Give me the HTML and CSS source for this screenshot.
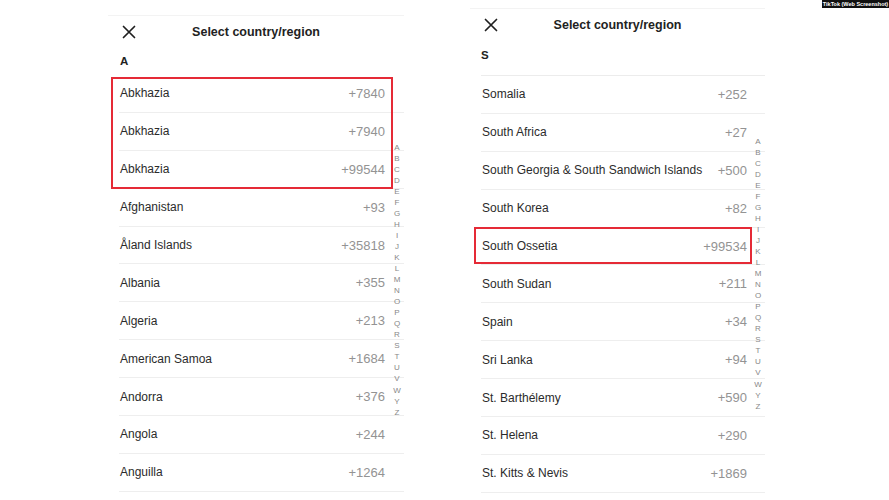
FILE: index.html
```html
<!DOCTYPE html>
<html>
<head>
<meta charset="utf-8">
<link rel="stylesheet" href="styles.css">
</head>
<body>
<div class="badge">TikTok (Web Screenshot)</div>
<div class="page">
  <section class="panel panel-left">
    <header class="head">
      <svg class="close" viewBox="0 0 14 14" width="14" height="14"><path d="M1.5 1.5 L12.5 12.5 M12.5 1.5 L1.5 12.5" stroke="#1f1f1f" stroke-width="1.7" stroke-linecap="round" fill="none"/></svg>
      <h1 class="title">Select country/region</h1>
    </header>
    <div class="section">A</div>
    <ul class="list">
      <li class="row"><span class="name">Abkhazia</span><span class="code">+7840</span></li>
      <li class="row"><span class="name">Abkhazia</span><span class="code">+7940</span></li>
      <li class="row"><span class="name">Abkhazia</span><span class="code">+99544</span></li>
      <li class="row"><span class="name">Afghanistan</span><span class="code">+93</span></li>
      <li class="row"><span class="name">Åland Islands</span><span class="code">+35818</span></li>
      <li class="row"><span class="name">Albania</span><span class="code">+355</span></li>
      <li class="row"><span class="name">Algeria</span><span class="code">+213</span></li>
      <li class="row"><span class="name">American Samoa</span><span class="code">+1684</span></li>
      <li class="row"><span class="name">Andorra</span><span class="code">+376</span></li>
      <li class="row"><span class="name">Angola</span><span class="code">+244</span></li>
      <li class="row"><span class="name">Anguilla</span><span class="code">+1264</span></li>
    </ul>
    <div class="mark mark-left"></div>
    <ol class="index index-left">
      <li>A</li><li>B</li><li>C</li><li>D</li><li>E</li><li>F</li><li>G</li><li>H</li><li>I</li><li>J</li><li>K</li><li>L</li><li>M</li><li>N</li><li>O</li><li>P</li><li>Q</li><li>R</li><li>S</li><li>T</li><li>U</li><li>V</li><li>W</li><li>Y</li><li>Z</li>
    </ol>
  </section>
  <section class="panel panel-right">
    <header class="head">
      <svg class="close" viewBox="0 0 14 14" width="14" height="14"><path d="M1.5 1.5 L12.5 12.5 M12.5 1.5 L1.5 12.5" stroke="#1f1f1f" stroke-width="1.7" stroke-linecap="round" fill="none"/></svg>
      <h1 class="title">Select country/region</h1>
    </header>
    <div class="section section-lined">S</div>
    <ul class="list">
      <li class="row"><span class="name">Somalia</span><span class="code">+252</span></li>
      <li class="row"><span class="name">South Africa</span><span class="code">+27</span></li>
      <li class="row"><span class="name">South Georgia &amp; South Sandwich Islands</span><span class="code">+500</span></li>
      <li class="row"><span class="name">South Korea</span><span class="code">+82</span></li>
      <li class="row"><span class="name">South Ossetia</span><span class="code">+99534</span></li>
      <li class="row"><span class="name">South Sudan</span><span class="code">+211</span></li>
      <li class="row"><span class="name">Spain</span><span class="code">+34</span></li>
      <li class="row"><span class="name">Sri Lanka</span><span class="code">+94</span></li>
      <li class="row"><span class="name">St. Barthélemy</span><span class="code">+590</span></li>
      <li class="row"><span class="name">St. Helena</span><span class="code">+290</span></li>
      <li class="row"><span class="name">St. Kitts &amp; Nevis</span><span class="code">+1869</span></li>
    </ul>
    <div class="mark mark-right"></div>
    <ol class="index index-right">
      <li>A</li><li>B</li><li>C</li><li>D</li><li>E</li><li>F</li><li>G</li><li>H</li><li>I</li><li>J</li><li>K</li><li>L</li><li>M</li><li>N</li><li>O</li><li>P</li><li>Q</li><li>R</li><li>S</li><li>T</li><li>U</li><li>V</li><li>W</li><li>Y</li><li>Z</li>
    </ol>
  </section>
</div>
</body>
</html>
```
FILE: styles.css
```css
* { box-sizing: border-box; }
html, body {
  margin: 0;
  padding: 0;
  background: #ffffff;
  width: 889px;
  height: 500px;
  overflow: hidden;
  font-family: "Liberation Sans", Arial, sans-serif;
  color: #2a2a2a;
}
.page {
  display: flex;
  align-items: flex-start;
  padding-left: 108px;
  gap: 66px;
}
.panel {
  position: relative;
  width: 296px;
  height: 500px;
  border-top: 1px solid #f3f3f3;
}
.panel-left { margin-top: 15px; }
.panel-right { margin-top: 8px; width: 295px; }
.head {
  position: relative;
  height: 32px;
  display: flex;
  align-items: center;
  justify-content: center;
}
.close {
  position: absolute;
  left: 14px;
  top: 9px;
}
.title {
  margin: 0;
  font-size: 12.5px;
  font-weight: bold;
  color: #222;
}
.section {
  margin-left: 12px;
  padding-top: 3px;
  height: 27px;
  line-height: 20px;
  font-size: 11.5px;
  font-weight: bold;
  color: #222;
}
.section-lined {
  margin-left: 11px;
  padding-top: 4px;
  height: 35px;
  border-bottom: 1px solid #ececec;
}
.list {
  list-style: none;
  margin: 0 0 0 11px;
  padding: 0;
}
.row {
  display: flex;
  justify-content: space-between;
  align-items: center;
  height: 37.9px;
  padding-left: 1px;
  padding-right: 19px;
  border-bottom: 1px solid #eeeeee;
  font-size: 12px;
}
.panel-right .row { padding-right: 18px; }
.name { color: #2b2b2b; }
.code { color: #939393; font-size: 13px; }
.mark {
  position: absolute;
  border: 2px solid #e52a36;
}
.mark-left { left: 3px; top: 61px; width: 282px; height: 112px; }
.mark-right { left: 4px; top: 218px; width: 278px; height: 37px; }
.index {
  position: absolute;
  list-style: none;
  margin: 0;
  padding: 0;
  width: 10px;
  font-size: 8px;
  line-height: 11.04px;
  color: #888888;
  text-align: center;
}
.index-left { left: 284px; top: 125.5px; }
.index-right { left: 283px; top: 126.5px; }
.badge {
  position: absolute;
  top: 0;
  right: 0;
  width: 67px;
  height: 8px;
  background: #111;
  color: #fff;
  font-size: 5.5px;
  font-weight: bold;
  line-height: 8px;
  text-align: center;
  white-space: nowrap;
}
```
